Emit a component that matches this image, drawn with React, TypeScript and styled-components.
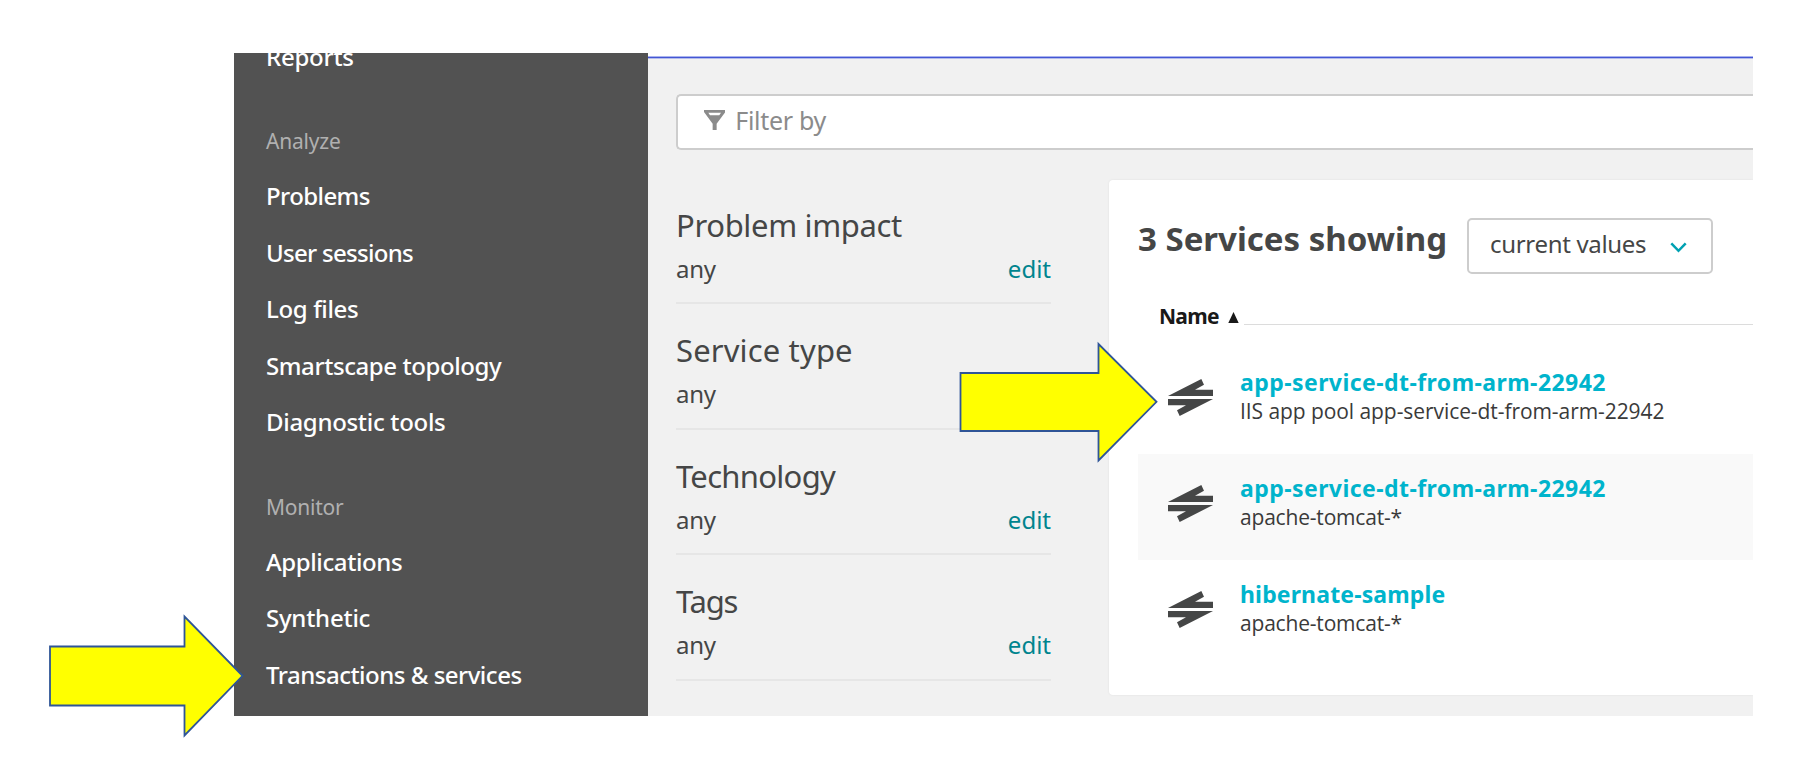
import React from 'react';
import styled, { createGlobalStyle } from 'styled-components';

const GlobalStyle = createGlobalStyle`
  * { box-sizing: border-box; }
  body {
    margin: 0;
    background: #fff;
    font-family: "Noto Sans", "Open Sans", sans-serif;
    color: #454646;
  }
`;

const Page = styled.div`
  position: relative;
  width: 1793px;
  height: 772px;
  padding: 53px 40px 56px 234px;
  overflow: hidden;
`;

const Frame = styled.div`
  display: flex;
  height: 663px;
  overflow: hidden;
`;

const Text = styled.span<{ $track?: number }>`
  letter-spacing: ${p => p.$track ?? 0}px;
  white-space: nowrap;
`;

/* Sidebar */
const Sidebar = styled.nav`
  flex: 0 0 414px;
  padding-left: 32px;
  background: #525252;
  overflow: hidden;
`;

const NavList = styled.div`
  margin-top: -24.5px;
`;

const NavItem = styled.div`
  height: 56.5px;
  line-height: 56.5px;
  font-size: 24px;
  font-weight: 500;
  color: #fff;
`;

const NavHeading = styled.div`
  height: 83px;
  padding-top: 29px;
  line-height: 54px;
  font-size: 21px;
  color: #b0b0b0;
`;

/* Main area */
const Main = styled.main`
  flex: 1;
  min-width: 0;
  display: flex;
  flex-direction: column;
  margin-top: 4px;
  border-top: 1px solid #4456d4;
  box-shadow: 0 -1px 0 #a9b3ee, inset 0 1px 0 #b4bcec;
  background: #f1f1f1;
  padding: 36px 0 0 28px;
  overflow: hidden;
`;

const FilterBar = styled.div`
  flex: none;
  display: flex;
  align-items: center;
  gap: 10px;
  height: 56px;
  padding: 0 0 5px 26px;
  border: 2px solid #cdcdcd;
  border-right: 0;
  border-radius: 5px 0 0 5px;
  background: #fff;
  font-size: 25px;
  color: #8b8b8b;
`;

const Columns = styled.div`
  display: flex;
  flex: 1;
  margin-top: 29px;
`;

const Facets = styled.aside`
  flex: 0 0 375px;
  margin-right: 58px;
`;

const Facet = styled.section`
  height: 125.4px;
  padding-top: 24px;
  border-bottom: 2px solid #e6e6e6;
`;

const FacetTitle = styled.h3`
  margin: 0 0 4px;
  font-size: 31px;
  font-weight: 400;
  line-height: 44px;
`;

const FacetRow = styled.div`
  display: flex;
  justify-content: space-between;
  font-size: 24px;
  line-height: 36px;
`;

const Edit = styled.a`
  color: #00848e;
`;

const Panel = styled.section`
  flex: 1;
  min-width: 0;
  height: 515px;
  margin-top: 1px;
  padding: 30px 0 0 29px;
  border-radius: 4px 0 0 4px;
  background: #fff;
  box-shadow: 0 0 2px #dedede;
`;

const PanelHeader = styled.header`
  display: flex;
  height: 91px;
`;

const Heading = styled.h2`
  margin: 0;
  width: 329px;
  padding-top: 1px;
  font-size: 33px;
  font-weight: 700;
  line-height: 56px;
`;

const Select = styled.div`
  display: flex;
  align-items: center;
  justify-content: space-between;
  width: 246px;
  height: 56px;
  margin-top: 8px;
  padding: 0 24px 5px 21px;
  border: 2px solid #cdcdcd;
  border-radius: 5px;
  font-size: 24px;
`;

const Chevron = styled.svg`
  margin-top: 7px;
`;

const TableHeader = styled.div`
  display: flex;
  height: 47px;
  padding-left: 21px;
  font-size: 21px;
  font-weight: 700;
  line-height: 30px;
  color: #191919;
`;

const SortMark = styled.svg`
  margin: 11px 5px 0 9px;
`;

const Rule = styled.div`
  flex: 1;
  height: 1px;
  margin-top: 23px;
  background: #dcdcdc;
`;

const Row = styled.div<{ $shaded?: boolean }>`
  display: flex;
  height: 106px;
  padding-left: 30px;
  background: ${p => (p.$shaded ? '#f9f9f9' : 'transparent')};
`;

const RowIcon = styled.svg`
  flex: none;
  margin: 31px 27px 0 0;
`;

const RowTitle = styled.div`
  margin-top: 19px;
  font-size: 23px;
  font-weight: 700;
  line-height: 31px;
  color: #00b4cc;
`;

const RowSub = styled.div`
  font-family: "Open Sans", "Noto Sans", sans-serif;
  font-size: 21px;
  line-height: 27px;
  color: #3a3a3a;
`;

/* Callout arrows lie over the frame */
const Callout = styled.svg<{ $left: number; $top: number }>`
  position: absolute;
  left: ${p => p.$left}px;
  top: ${p => p.$top}px;
`;

type Label = [text: string, track: number];

const ANALYZE: Label[] = [
  ['Problems', -0.59],
  ['User sessions', -0.7],
  ['Log files', -0.36],
  ['Smartscape topology', -0.42],
  ['Diagnostic tools', -0.31],
];

const MONITOR: Label[] = [
  ['Applications', -0.4],
  ['Synthetic', -0.25],
  ['Transactions & services', -0.5],
];

const FACETS: Label[] = [
  ['Problem impact', -0.35],
  ['Service type', 0.14],
  ['Technology', -0.7],
  ['Tags', -1.2],
];

const SERVICES: { title: Label; sub: Label }[] = [
  {
    title: ['app-service-dt-from-arm-22942', 0.44],
    sub: ['IIS app pool app-service-dt-from-arm-22942', -0.07],
  },
  { title: ['app-service-dt-from-arm-22942', 0.44], sub: ['apache-tomcat-*', -0.19] },
  { title: ['hibernate-sample', 0.15], sub: ['apache-tomcat-*', -0.19] },
];

const NavItems = ({ items }: { items: Label[] }) => (
  <>
    {items.map(([text, track]) => (
      <NavItem key={text}>
        <Text $track={track}>{text}</Text>
      </NavItem>
    ))}
  </>
);

const FunnelIcon = () => (
  <svg width="21.3" height="20" viewBox="24 30 64 60">
    <path
      fill="#8b8b8b"
      fillRule="evenodd"
      d="M24 30H88V36L62 71V90H50V71L24 36ZM37 38H75L70 46H42Z"
    />
  </svg>
);

const ServiceIcon = () => (
  <RowIcon width="45" height="37" viewBox="25 27 135 111">
    <path
      fill="#454646"
      d="M25 78L125 27L133 44L106 59H160V78ZM25 87H160L60 138L52 121L79 106H25Z"
    />
  </RowIcon>
);

export default function App() {
  return (
    <Page>
      <GlobalStyle />
      <Frame>
        <Sidebar>
          <NavList>
            <NavItem>
              <Text $track={-0.25}>Reports</Text>
            </NavItem>
            <NavHeading>
              <Text $track={-0.2}>Analyze</Text>
            </NavHeading>
            <NavItems items={ANALYZE} />
            <NavHeading>
              <Text $track={-0.23}>Monitor</Text>
            </NavHeading>
            <NavItems items={MONITOR} />
          </NavList>
        </Sidebar>
        <Main>
          <FilterBar>
            <FunnelIcon />
            <Text $track={-0.3}>Filter by</Text>
          </FilterBar>
          <Columns>
            <Facets>
              {FACETS.map(([text, track]) => (
                <Facet key={text}>
                  <FacetTitle>
                    <Text $track={track}>{text}</Text>
                  </FacetTitle>
                  <FacetRow>
                    <Text $track={-0.3}>any</Text>
                    <Edit>edit</Edit>
                  </FacetRow>
                </Facet>
              ))}
            </Facets>
            <Panel>
              <PanelHeader>
                <Heading>
                  <Text>3 Services showing</Text>
                </Heading>
                <Select>
                  <Text $track={-0.32}>current values</Text>
                  <Chevron width="17" height="11" viewBox="0 0 17 11">
                    <path d="M1.3 1.3L8.5 8.8L15.7 1.3" fill="none" stroke="#00a1b2" strokeWidth="2.5" />
                  </Chevron>
                </Select>
              </PanelHeader>
              <TableHeader>
                <Text $track={-0.7}>Name</Text>
                <SortMark width="11" height="11" viewBox="0 0 11 11">
                  <path d="M5.5 0L10.7 11H0.3Z" fill="#191919" />
                </SortMark>
                <Rule />
              </TableHeader>
              {SERVICES.map(({ title, sub }, i) => (
                <Row key={i} $shaded={i % 2 === 1}>
                  <ServiceIcon />
                  <div>
                    <RowTitle>
                      <Text $track={title[1]}>{title[0]}</Text>
                    </RowTitle>
                    <RowSub>
                      <Text $track={sub[1]}>{sub[0]}</Text>
                    </RowSub>
                  </div>
                </Row>
              ))}
            </Panel>
          </Columns>
        </Main>
      </Frame>
      <Callout $left={48} $top={612} width="200" height="128">
        <path
          d="M2 34.5H136.5V4.5L194.5 63.8L136.5 123.5V93.5H2Z"
          fill="#ff0"
          stroke="#2f5597"
          strokeWidth="1.8"
        />
      </Callout>
      <Callout $left={958} $top={340} width="204" height="126">
        <path
          d="M2.5 33H140.5V4L198.5 61.8L140.5 120.5V91H2.5Z"
          fill="#ff0"
          stroke="#2f5597"
          strokeWidth="1.8"
        />
      </Callout>
    </Page>
  );
}
